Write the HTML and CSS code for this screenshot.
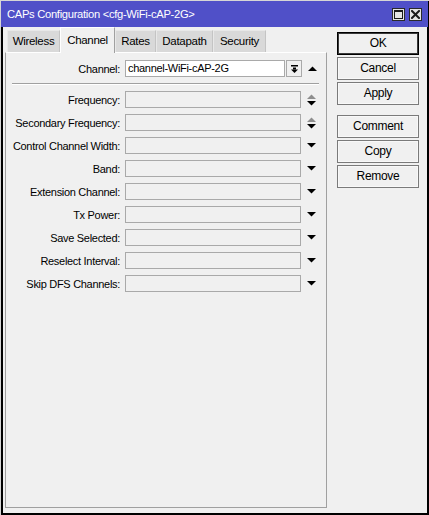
FILE: index.html
```html
<!DOCTYPE html>
<html>
<head>
<meta charset="utf-8">
<title>CAPs Configuration</title>
<link rel="stylesheet" href="styles.css">
</head>
<body>
<div class="window">
  <div class="titlebar">
    <span class="title">CAPs Configuration &lt;cfg-WiFi-cAP-2G&gt;</span>
    <div class="tb-buttons">
      <span class="tb-btn"><svg width="9" height="9" viewBox="0 0 9 9"><rect x="0.5" y="0.5" width="8" height="8" fill="none" stroke="#1a1a1a" stroke-width="1"/><rect x="0" y="0" width="9" height="2" fill="#1a1a1a"/></svg></span>
      <span class="tb-btn"><svg width="9" height="9" viewBox="0 0 9 9"><path d="M1 1 L8 8 M8 1 L1 8" stroke="#1a1a1a" stroke-width="2" stroke-linecap="square"/></svg></span>
    </div>
  </div>
  <div class="body">
    <div class="left">
      <div class="tabs">
        <div class="tab t-wireless">Wireless</div>
        <div class="tab active t-channel">Channel</div>
        <div class="tab t-rates">Rates</div>
        <div class="tab t-datapath">Datapath</div>
        <div class="tab t-security">Security</div>
      </div>
      <div class="panel">
        <div class="row">
          <label class="lbl">Channel:</label>
          <div class="field combo">channel-WiFi-cAP-2G</div>
          <span class="ddbtn"><svg width="7" height="8" viewBox="0 0 7 8"><rect x="0" y="0" width="7" height="1.5" fill="#000"/><rect x="2" y="2.5" width="3" height="2" fill="#000"/><polygon points="0,4.5 7,4.5 3.5,8" fill="#000"/></svg></span>
          <span class="arrow"><svg width="9" height="5" viewBox="0 0 9 5"><polygon points="0,5 9,5 4.5,0.5" fill="#000"/></svg></span>
        </div>
        <div class="sep"></div>
        <div class="row">
          <label class="lbl">Frequency:</label>
          <div class="field"></div>
          <span class="arrow spin"><svg width="9" height="12" viewBox="0 0 9 12"><polygon points="0,5 9,5 4.5,0.5" fill="#8e8e8e"/><polygon points="0,7 9,7 4.5,11.5" fill="#000"/></svg></span>
        </div>
        <div class="row">
          <label class="lbl">Secondary Frequency:</label>
          <div class="field"></div>
          <span class="arrow spin"><svg width="9" height="12" viewBox="0 0 9 12"><polygon points="0,5 9,5 4.5,0.5" fill="#8e8e8e"/><polygon points="0,7 9,7 4.5,11.5" fill="#000"/></svg></span>
        </div>
        <div class="row">
          <label class="lbl">Control Channel Width:</label>
          <div class="field"></div>
          <span class="arrow"><svg width="9" height="5" viewBox="0 0 9 5"><polygon points="0,0 9,0 4.5,4.5" fill="#000"/></svg></span>
        </div>
        <div class="row">
          <label class="lbl">Band:</label>
          <div class="field"></div>
          <span class="arrow"><svg width="9" height="5" viewBox="0 0 9 5"><polygon points="0,0 9,0 4.5,4.5" fill="#000"/></svg></span>
        </div>
        <div class="row">
          <label class="lbl">Extension Channel:</label>
          <div class="field"></div>
          <span class="arrow"><svg width="9" height="5" viewBox="0 0 9 5"><polygon points="0,0 9,0 4.5,4.5" fill="#000"/></svg></span>
        </div>
        <div class="row">
          <label class="lbl">Tx Power:</label>
          <div class="field"></div>
          <span class="arrow"><svg width="9" height="5" viewBox="0 0 9 5"><polygon points="0,0 9,0 4.5,4.5" fill="#000"/></svg></span>
        </div>
        <div class="row">
          <label class="lbl">Save Selected:</label>
          <div class="field"></div>
          <span class="arrow"><svg width="9" height="5" viewBox="0 0 9 5"><polygon points="0,0 9,0 4.5,4.5" fill="#000"/></svg></span>
        </div>
        <div class="row">
          <label class="lbl">Reselect Interval:</label>
          <div class="field"></div>
          <span class="arrow"><svg width="9" height="5" viewBox="0 0 9 5"><polygon points="0,0 9,0 4.5,4.5" fill="#000"/></svg></span>
        </div>
        <div class="row">
          <label class="lbl">Skip DFS Channels:</label>
          <div class="field"></div>
          <span class="arrow"><svg width="9" height="5" viewBox="0 0 9 5"><polygon points="0,0 9,0 4.5,4.5" fill="#000"/></svg></span>
        </div>
      </div>
    </div>
    <div class="buttons">
      <div class="btn default">OK</div>
      <div class="btn">Cancel</div>
      <div class="btn">Apply</div>
      <div class="btn gap">Comment</div>
      <div class="btn">Copy</div>
      <div class="btn">Remove</div>
    </div>
  </div>
</div>
</body>
</html>
```

FILE: styles.css
```css
* { box-sizing: border-box; }
html, body { margin: 0; padding: 0; }
body {
  font-family: "Liberation Sans", Arial, sans-serif;
  font-size: 11px;
  letter-spacing: -0.3px;
  color: #000;
  background: #f0f0f0;
}
.window {
  width: 429px;
  height: 515px;
  border-top: 1px solid #d6d6d6;
  border-left: 1px solid #d6d6d6;
  display: flex;
  flex-direction: column;
  background: #f0f0f0;
}
.titlebar {
  height: 26px;
  flex: none;
  background: #5050c8;
  display: flex;
  align-items: flex-start;
  justify-content: space-between;
  border-right: 1px solid #000;
}
.title {
  color: #fff;
  font-size: 11.2px;
  letter-spacing: -0.3px;
  line-height: 26px;
  padding-left: 6px;
}
.tb-buttons {
  display: flex;
  gap: 4px;
  margin-top: 7px;
  padding-right: 6px;
}
.tb-btn {
  width: 13px;
  height: 13px;
  border: 1px solid #2a2a2a;
  background: #e4e4e4;
  display: flex;
  align-items: center;
  justify-content: center;
}
.tb-btn svg { display: block; }
.body {
  flex: 1;
  display: flex;
  border-left: 2px solid #000;
  border-right: 2px solid #000;
  border-bottom: 2px solid #000;
  padding-left: 2px;
}
.left {
  width: 322px;
  display: flex;
  flex-direction: column;
  padding-bottom: 5px;
}
.tabs {
  height: 25px;
  display: flex;
  align-items: flex-end;
  padding-left: 2px;
  position: relative;
  z-index: 1;
}
.tab {
  height: 22px;
  line-height: 20px;
  padding: 0;
  text-align: center;
  font-size: 11.5px;
  background: #d9d9d9;
  border-top: 1px solid #e8e8e8;
  border-left: 1px solid #e8e8e8;
  border-right: 1px solid #c4c4c4;
}
.t-wireless { width: 53px; }
.t-channel { width: 55px; }
.t-rates { width: 41px; }
.t-datapath { width: 57px; }
.t-security { width: 53px; }
.tab.active {
  height: 26px;
  line-height: 24px;
  margin-bottom: -1px;
  background: #f0f0f0;
  border-top: 1px solid #fff;
  border-left: 1px solid #fff;
  border-right: 1px solid #a0a0a0;
  padding-bottom: 2px;
}
.panel {
  flex: 1;
  border-top: 1px solid #fff;
  border-left: 1px solid #a0a0a0;
  border-right: 1px solid #a0a0a0;
  border-bottom: 1px solid #a0a0a0;
  padding-top: 7px;
  display: flex;
  flex-direction: column;
  gap: 6px;
}
.row {
  display: flex;
  align-items: center;
  height: 17px;
}
.lbl {
  width: 114px;
  margin-right: 5px;
  text-align: right;
  white-space: nowrap;
}
.field {
  width: 176px;
  height: 17px;
  border: 1px solid #a9a9a9;
  background: #f0f0f0;
  padding-left: 2px;
  line-height: 15px;
}
.field.combo {
  width: 160px;
  background: #fff;
  height: 17px;
}
.ddbtn {
  width: 16px;
  height: 17px;
  margin-left: 1px;
  border: 1px solid #a9a9a9;
  background: #f0f0f0;
  display: flex;
  align-items: center;
  justify-content: center;
}
.ddbtn svg, .arrow svg { display: block; }
.arrow {
  margin-left: 6px;
  width: 9px;
  display: flex;
  justify-content: center;
}
.sep {
  margin: 0 7px 0 6px;
  border-top: 1px solid #a0a0a0;
  border-bottom: 1px solid #fff;
}
.buttons {
  margin-left: 10px;
  margin-top: 5px;
  width: 82px;
  display: flex;
  flex-direction: column;
  gap: 2px;
}
.btn {
  height: 23px;
  border: 1px solid #7a7a7a;
  box-shadow: inset 0 0 0 1px #f8f8f8;
  background: #f0f0f0;
  text-align: center;
  line-height: 21px;
  font-size: 12px;
}
.btn.default {
  border: 1px solid #000;
  box-shadow: inset 0 0 0 1px #3a3a3a;
}
.btn.gap { margin-top: 8px; }
```
